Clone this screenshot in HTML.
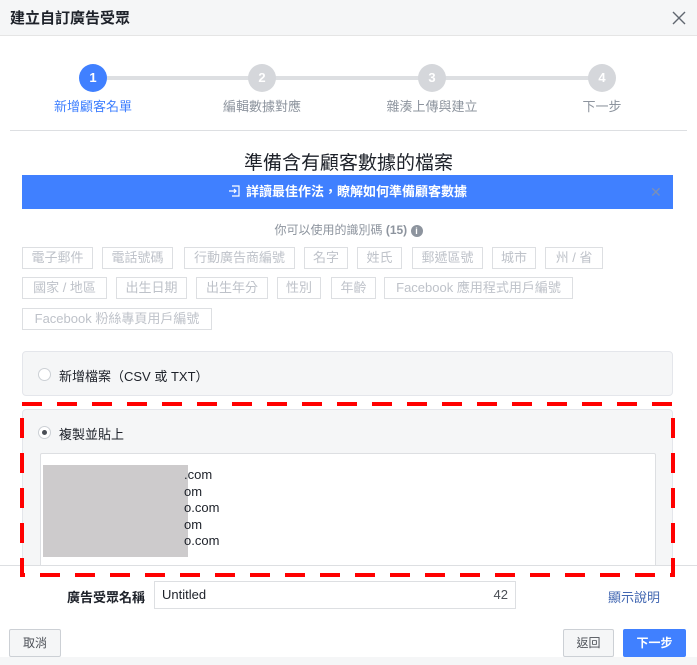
<!DOCTYPE html>
<html><head><meta charset="utf-8"><style>
*{box-sizing:border-box;margin:0;padding:0}
body{width:697px;height:665px;position:relative;background:#fff;font-family:"Liberation Sans","Noto Sans CJK TC",sans-serif;color:#1d2129;overflow:hidden;font-size:13px}
.a{position:absolute}
.tag{position:absolute;border:1px solid #dddfe2;color:#bec2c9;font-size:13px;height:22px;line-height:20px;text-align:center;white-space:nowrap;background:#fff}
.c{width:28px;height:28px;border-radius:50%;background:#d5d7db;color:#fff;font-weight:bold;font-size:13px;text-align:center;line-height:28px;top:64px}
.lbl{top:96px;font-size:13px;color:#8d949e;width:120px;text-align:center}
.btn{position:absolute;height:28px;border:1px solid #ccd0d5;background:#f5f6f7;border-radius:2px;font-size:12px;line-height:26px;text-align:center;color:#4b4f56}
</style></head><body>
<div class="a" style="left:0;top:0;width:697px;height:36px;background:#f5f6f7;border-bottom:1px solid #e5e5e5"></div>
<div class="a" style="left:10px;top:7px;font-size:15px;font-weight:bold;color:#1d2129">建立自訂廣告受眾</div>
<svg class="a" style="left:672px;top:11px" width="14" height="14"><path d="M1 1L13 13M13 1L1 13" stroke="#606770" stroke-width="1.4"/></svg>

<div class="a" style="left:93px;top:76px;width:509px;height:4px;background:#dddfe2"></div>
<div class="a c" style="left:79px;background:#4080ff">1</div>
<div class="a c" style="left:248px">2</div>
<div class="a c" style="left:418px">3</div>
<div class="a c" style="left:588px">4</div>
<div class="a lbl" style="left:33px;color:#4080ff">新增顧客名單</div>
<div class="a lbl" style="left:202px">編輯數據對應</div>
<div class="a lbl" style="left:372px">雜湊上傳與建立</div>
<div class="a lbl" style="left:542px">下一步</div>
<div class="a" style="left:10px;top:130px;width:677px;height:1px;background:#dddfe2"></div>

<div class="a" style="left:0;top:148px;width:697px;text-align:center;font-size:19px;color:#1d2129">準備含有顧客數據的檔案</div>
<div class="a" style="left:22px;top:175px;width:651px;height:34px;background:#4080ff;color:#fff;font-weight:bold;font-size:13px;line-height:34px;text-align:center"><svg width="12" height="12" style="vertical-align:-1px;margin-right:6px"><path d="M4 1H11V11H4M1 6H8M6 4L8 6L6 8" fill="none" stroke="#fff" stroke-width="1.2"/></svg>詳讀最佳作法，瞭解如何準備顧客數據</div>
<div class="a" style="left:650px;top:184px;color:#7a8fb8;font-size:14px">✕</div>
<div class="a" style="left:0;top:221px;width:697px;text-align:center;font-size:12px;color:#8d949e">你可以使用的識別碼 <b>(15)</b> <span style="display:inline-block;width:12px;height:12px;border-radius:50%;background:#8d949e;color:#fff;font-size:9px;line-height:12px;font-weight:bold">i</span></div>

<div class="tag" style="left:22px;top:247px;width:71px">電子郵件</div>
<div class="tag" style="left:102px;top:247px;width:71px">電話號碼</div>
<div class="tag" style="left:184px;top:247px;width:111px">行動廣告商編號</div>
<div class="tag" style="left:304px;top:247px;width:44px">名字</div>
<div class="tag" style="left:357px;top:247px;width:45px">姓氏</div>
<div class="tag" style="left:412px;top:247px;width:71px">郵遞區號</div>
<div class="tag" style="left:492px;top:247px;width:44px">城市</div>
<div class="tag" style="left:545px;top:247px;width:58px">州 / 省</div>
<div class="tag" style="left:22px;top:277px;width:85px">國家 / 地區</div>
<div class="tag" style="left:116px;top:277px;width:71px">出生日期</div>
<div class="tag" style="left:196px;top:277px;width:72px">出生年分</div>
<div class="tag" style="left:277px;top:277px;width:44px">性別</div>
<div class="tag" style="left:331px;top:277px;width:45px">年齡</div>
<div class="tag" style="left:384px;top:277px;width:189px">Facebook 應用程式用戶編號</div>
<div class="tag" style="left:22px;top:308px;width:190px">Facebook 粉絲專頁用戶編號</div>

<div class="a" style="left:22px;top:351px;width:651px;height:45px;background:#f5f6f7;border:1px solid #e4e6eb;border-radius:4px"></div>
<div class="a" style="left:38px;top:368px;width:13px;height:13px;border-radius:50%;border:1px solid #ccd0d5;background:#fff"></div>
<div class="a" style="left:59px;top:366px;font-size:13px">新增檔案（CSV 或 TXT）</div>

<div class="a" style="left:22px;top:409px;width:651px;height:170px;background:#f5f6f7;border:1px solid #e4e6eb;border-radius:4px"></div>
<div class="a" style="left:38px;top:426px;width:13px;height:13px;border-radius:50%;border:1px solid #ccd0d5;background:#fff"><div style="width:5px;height:5px;border-radius:50%;background:#4b4f56;margin:3px"></div></div>
<div class="a" style="left:59px;top:424px;font-size:13px">複製並貼上</div>
<div class="a" style="left:40px;top:453px;width:616px;height:130px;background:#fff;border:1px solid #dddfe2;border-radius:2px"></div>
<div class="a" style="left:43px;top:465px;width:145px;height:92px;background:#cdcbcc"></div>
<div class="a" style="left:184px;top:467px;font-size:13px;line-height:16.6px;color:#1d2129">.com<br>om<br>o.com<br>om<br>o.com</div>

<div class="a" style="left:0;top:565px;width:697px;height:100px;background:#fff;border-top:1px solid #dddfe2"></div>
<svg class="a" style="left:0;top:0" width="697" height="665"><rect x="22" y="404" width="651" height="171" fill="none" stroke="#f00" stroke-width="4" stroke-dasharray="20,15"/></svg>

<div class="a" style="left:40px;top:587px;width:105px;text-align:right;font-weight:bold;font-size:13px">廣告受眾名稱</div>
<div class="a" style="left:154px;top:581px;width:362px;height:28px;border:1px solid #dddfe2;padding:0 7px;line-height:26px;font-size:13px">Untitled<span style="float:right;color:#4b4f56">42</span></div>
<div class="a" style="left:608px;top:587px;font-size:13px;color:#4267b2">顯示說明</div>

<div class="a" style="left:0;top:657px;width:697px;height:8px;background:#f5f6f7"></div>
<div class="btn" style="left:9px;top:629px;width:52px">取消</div>
<div class="btn" style="left:563px;top:629px;width:51px">返回</div>
<div class="btn" style="left:623px;top:629px;width:63px;background:#4080ff;border-color:#4080ff;color:#fff;font-weight:bold">下一步</div>
</body></html>
